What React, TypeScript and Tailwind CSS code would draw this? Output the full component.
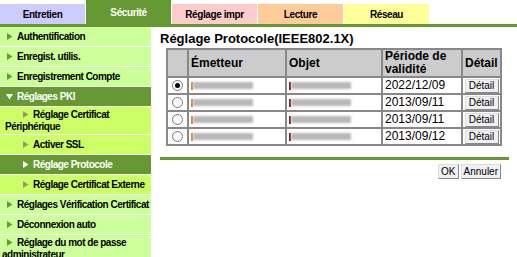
import React from "react";

const font = { fontFamily: '"Liberation Sans", Arial, sans-serif' };

function Arrow({ down, color }: { down?: boolean; color: string }) {
  return (
    <svg width="7" height="7" viewBox="0 0 7 7" className="inline-block mr-[4px] align-[0px]" style={{ fill: color }}>
      {down ? <polygon points="0,1 7,1 3.5,6.5" /> : <polygon points="1,0 6.5,3.5 1,7" />}
    </svg>
  );
}

type Item = { label: string; level: 0 | 1; active?: boolean; open?: boolean; tall?: boolean };

const items: Item[] = [
  { label: "Authentification", level: 0 },
  { label: "Enregist. utilis.", level: 0 },
  { label: "Enregistrement Compte", level: 0 },
  { label: "Réglages PKI", level: 0, active: true, open: true },
  { label: "Réglage Certificat Périphérique", level: 1, tall: true },
  { label: "Activer SSL", level: 1 },
  { label: "Réglage Protocole", level: 1, active: true },
  { label: "Réglage Certificat Externe", level: 1 },
  { label: "Réglages Vérification Certificat", level: 0 },
  { label: "Déconnexion auto", level: 0 },
  { label: "Réglage du mot de passe administrateur", level: 0, tall: true },
];

function SideItem({ it }: { it: Item }) {
  const bg = it.active ? "bg-[#669933] text-white" : it.level === 1 ? "bg-[#ccff66] text-black" : "bg-[#ccff99] text-black";
  const arrowColor = it.active ? "#ffffff" : it.level === 1 ? "#999966" : "#669933";
  const indent = it.level === 1 ? "pl-[5px] indent-[17px]" : "pl-[2px] indent-[4px]";
  const h = it.tall ? "pt-[2px] pb-[1px] leading-[12px]" : "h-[20px] pt-[4px] leading-[12px] whitespace-nowrap";
  return (
    <div className={`${bg} ${indent} ${h} border-b border-white text-[10px] tracking-[-0.5px] font-bold overflow-hidden`}>
      <Arrow color={arrowColor} down={it.open} />
      {it.label}
    </div>
  );
}

function Radio({ checked }: { checked?: boolean }) {
  return (
    <div className="w-[11px] h-[11px] rounded-full border border-[#777] bg-white flex items-center justify-center">
      {checked && <div className="w-[5px] h-[5px] rounded-full bg-black" />}
    </div>
  );
}

function Blur({ tick }: { tick: string }) {
  return (
    <div className="flex items-center">
      <div className="w-[2px] h-[8px]" style={{ background: tick }} />
      <div className="w-[60px] h-[7px] bg-[#b8b8b8] blur-[1px]" />
    </div>
  );
}

function DetailBtn() {
  return (
    <button className="w-[34px] h-[14px] bg-[#f0f0f0] border border-[#888] border-t-[#ddd] border-l-[#ddd] text-[10px] leading-[12px] text-black">
      Détail
    </button>
  );
}

const rows = [
  { checked: true, date: "2022/12/09" },
  { date: "2013/09/11" },
  { date: "2013/09/11" },
  { date: "2013/09/12" },
];

export default function App() {
  const tabs = [
    { t: "Entretien", c: "bg-[#ccccff] text-black" },
    { t: "Sécurité", c: "bg-[#669933] text-white" },
    { t: "Réglage impr", c: "bg-[#ffcccc] text-black" },
    { t: "Lecture", c: "bg-[#ffcc99] text-black" },
    { t: "Réseau", c: "bg-[#ffff99] text-black" },
  ];
  const cell = "border-2 border-[#888]";
  const btn = "h-[15px] px-[2px] bg-[#f0f0f0] border border-[#888] border-t-[#ddd] border-l-[#ddd] text-[10px] leading-[12px]";
  return (
    <div className="w-[517px] h-[257px] bg-white overflow-hidden" style={font}>
      <div className="flex gap-px h-[24px] items-end">
        {tabs.map((tb, i) => (
          <div
            key={tb.t}
            className={`w-[85px] ${i === 1 ? "h-[24px]" : "h-[20px]"} ${tb.c} flex items-center justify-center text-[10px] tracking-[-0.4px] font-bold`}
          >
            {tb.t}
          </div>
        ))}
      </div>
      <div className="h-[3px] bg-[#669933]" />
      <div className="flex">
        <div className="w-[152px] shrink-0 flex flex-col border-r border-white">
          {items.map((it) => (
            <SideItem key={it.label} it={it} />
          ))}
        </div>
        <div className="flex-1 pl-[8px] pr-[8px] pt-[4px]">
          <div className="text-[13px] font-bold leading-[16px] text-black">Réglage Protocole(IEEE802.1X)</div>
          <div className="pl-[6px] pt-[1px]">
            <table className="border-collapse text-black">
              <thead>
                <tr className="bg-[#cccccc] text-[12px] font-bold text-left h-[27px]">
                  <th className={`${cell} w-[21px]`}></th>
                  <th className={`${cell} w-[98px] pl-[2px]`}>Émetteur</th>
                  <th className={`${cell} w-[96px] pl-[2px]`}>Objet</th>
                  <th className={`${cell} w-[80px] pl-[2px] leading-[13px]`}>
                    <div>Période de</div>
                    <div>validité</div>
                  </th>
                  <th className={`${cell} w-[39px] pl-[2px]`}>Détail</th>
                </tr>
              </thead>
              <tbody>
                {rows.map((r, i) => (
                  <tr key={i} className="h-[17px] bg-white">
                    <td className={cell}>
                      <div className="flex justify-center">
                        <Radio checked={r.checked} />
                      </div>
                    </td>
                    <td className={`${cell} pl-[2px]`}>
                      <Blur tick="#e08a2c" />
                    </td>
                    <td className={`${cell} pl-[2px]`}>
                      <Blur tick="#8b1a1a" />
                    </td>
                    <td className={`${cell} pl-[2px] text-[12px] leading-[13px]`}>{r.date}</td>
                    <td className={`${cell} text-center leading-none`}>
                      <div className="flex justify-center">
                        <DetailBtn />
                      </div>
                    </td>
                  </tr>
                ))}
              </tbody>
            </table>
          </div>
          <div className="mt-[11px] h-[3px] bg-[#669933]" />
          <div className="flex justify-end gap-[2px] mt-[4px] pr-[8px]">
            <button className={btn}>OK</button>
            <button className={btn}>Annuler</button>
          </div>
        </div>
      </div>
    </div>
  );
}
